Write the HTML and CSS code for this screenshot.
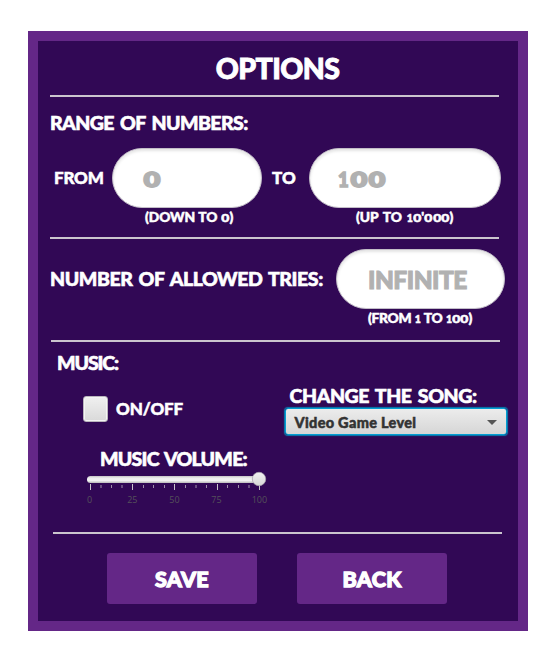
FILE: index.html
```
<!DOCTYPE html>
<html lang="en">
<head>
<meta charset="utf-8">
<title>Options</title>
<link rel="stylesheet" href="styles.css">
</head>
<body>
<main class="panel">
  <header class="top"><h1>OPTIONS</h1></header>

  <section class="range">
    <h2 class="range-title">RANGE OF NUMBERS:</h2>
    <div class="range-row">
      <span class="word from">FROM</span>
      <div class="col col-from">
        <div class="field"><span class="ring">0</span></div>
        <small class="hint hint-from">(DOWN TO <span class="nil">0</span>)</small>
      </div>
      <span class="word to">TO</span>
      <div class="col col-to">
        <div class="field hundred"><span class="one">1</span><span class="ring">0</span><span class="ring">0</span></div>
        <small class="hint hint-to">(UP TO <span class="low">1</span><span class="nil">0</span>'<span class="nil">0</span><span class="nil">0</span><span class="nil">0</span>)</small>
      </div>
    </div>
  </section>

  <section class="tries">
    <h2 class="tries-title">NUMBER OF ALLOWED TRIES:</h2>
    <div class="col col-tries">
      <div class="field infinite">INFINITE</div>
      <small class="hint hint-tries">(FROM <span class="low">1</span> TO <span class="low">1</span><span class="nil">0</span><span class="nil">0</span>)</small>
    </div>
  </section>

  <section class="music">
    <div class="music-left">
      <h2 class="music-title">MUSIC:</h2>
      <div class="toggle"><span class="box"></span><span class="word onoff">ON/OFF</span></div>
      <h2 class="volume-title">MUSIC VOLUME:</h2>
      <svg class="slider" width="190" height="36" viewBox="82 470 190 36">
        <defs>
          <linearGradient id="track" x1="0" y1="0" x2="0" y2="1"><stop offset="0" stop-color="#c2c2c2"/><stop offset=".3" stop-color="#eeeeee"/><stop offset=".65" stop-color="#f2f2f2"/><stop offset="1" stop-color="#b8b8b8"/></linearGradient>
          <linearGradient id="thumb" x1="0" y1="0" x2="0" y2="1"><stop offset="0" stop-color="#f2f2f2"/><stop offset="1" stop-color="#d6d6d6"/></linearGradient>
        </defs>
        <path class="major" d="M90.5 484v6M132.5 484v6M174.5 484v6M217.5 484v6M259.5 484v6"/>
        <path class="minor" d="M101 485v3M111.5 485v3M122 485v3M143.500 485v3M153.500 485v3M164.500 485v3M185.500 485v3M196 485v3M206.500 485v3M227.500 485v3M238.500 485v3M249 485v3"/>
        <rect x="87" y="476" width="177" height="7" rx="3.500" fill="url(#track)"/>
        <circle cx="259" cy="479" r="6.700" fill="url(#thumb)" stroke="#aaa5ae" stroke-width=".8"/>
        <g class="labels"><text x="89.700" y="503">0</text><text x="132.300" y="503">25</text><text x="174.500" y="503">50</text><text x="216.500" y="503">75</text><text x="259.400" y="503">100</text></g>
      </svg>
    </div>
    <div class="music-right">
      <h2 class="song-title">CHANGE THE SONG:</h2>
      <div class="combo"><span>Video Game Level</span><i class="arrow"></i></div>
    </div>
  </section>

  <footer class="actions">
    <button class="btn">SAVE</button>
    <button class="btn">BACK</button>
  </footer>
</main>
</body>
</html>
```
FILE: styles.css
```
* { box-sizing: border-box; }
body { margin: 0; background: #fff; color: #fff; font-family: "Lato", "Liberation Sans", sans-serif; font-weight: 900; -webkit-text-stroke: .5px currentColor; }
.panel { width: 500px; height: 600px; margin: 31px 0 0 28px; border: 10px solid #642787; background: #310855; }
h1, h2 { margin: 0; font-weight: 900; white-space: nowrap; }
h1 { font-size: 28.500px; line-height: 54px; letter-spacing: -.6px; text-align: center; -webkit-text-stroke-width: .9px; }
h2 { font-size: 19.500px; line-height: 26px; word-spacing: 2px; -webkit-text-stroke-width: .6px; }

.top, .range, .tries, .music { border-bottom: 2px solid #cbc5ce; }
.top { height: 56px; margin: 0 19px 0 12px; }
.top h1 { padding-left: 6px; }

.range { height: 142px; margin: 0 19px 0 12px; padding-top: 13px; }
.range-title { letter-spacing: -.55px; }
.range-row { display: flex; width: 455px; margin-top: 12px; }
.word { font-size: 17px; line-height: 60px; white-space: nowrap; }
.from { width: 58px; margin-left: 4px; letter-spacing: -.2px; }
.to { width: 37px; margin-left: 10px; }
.col { flex: none; text-align: center; }
.col-from { width: 150px; }
.col-to { width: 192px; }
.field {
  display: flex; align-items: center; height: 60px; padding-left: 30px; border-radius: 30px;
  background: #fff; color: #b1b1b1; border: 1px solid #c3bec8; box-shadow: inset 0 2px 3px #e4e4e4;
  font-size: 22px;
}
.ring { display: inline-block; flex: none; width: 18px; font-size: 20.500px; text-align: center; transform: translateY(1px) scaleX(1.38); -webkit-text-stroke-width: 1.800px; }
.ring { text-indent: 3px; display: flex; justify-content: center; text-indent: 0; }
.one { width: 11.500px; font-size: 20.500px; transform: translateY(1px) scaleX(.9); transform-origin: left; -webkit-text-stroke-width: 1.500px; }
.hundred { padding-left: 28px; }
.hint { display: block; font-size: 13.800px; line-height: 17px; white-space: nowrap; text-align: left; }
.hint-from { padding-left: 33px; letter-spacing: -.1px; word-spacing: .5px; }
.hint-to { padding-left: 47px; word-spacing: 1.500px; }
.hint-tries { padding-left: 32px; letter-spacing: -.3px; word-spacing: .6px; }
.nil { display: inline-block; width: 8.400px; font-size: 10.500px; text-align: center; letter-spacing: 0; transform: scaleX(1.32); }
.low { font-size: 10.500px; }

.tries { display: flex; width: 449px; height: 103px; margin-left: 13px; padding-top: 10px; }
.tries-title { flex: none; width: 285px; margin-left: -1px; line-height: 60px; letter-spacing: -.43px; }
.col-tries { width: 169px; margin-left: 1px; }
.infinite { font-size: 24.500px; padding-left: 31px; letter-spacing: -.5px; -webkit-text-stroke-width: 1px; }

.music { display: flex; width: 449px; height: 192px; margin-left: 15px; }
.music-left { width: 231.500px; flex: none; }
.music-title { margin: 8px 0 0 4px; letter-spacing: -1.1px; }
.toggle { display: flex; align-items: center; height: 26px; margin: 20px 0 0 30px; }
.box { width: 25px; height: 26px; margin-right: 8px; border: 1px solid #bab6bd; border-radius: 3px; background: linear-gradient(#f0f0f0, #d9d9d9); box-shadow: inset 0 0 0 1px #f4f4f4; }
.onoff { line-height: 26px; letter-spacing: -.1px; }
.volume-title { margin: 24px 0 0 47px; padding-bottom: 1px; letter-spacing: -.75px; }
.slider { display: block; margin: -3px 0 0 29px; }
.major { stroke: #c9c4cc; stroke-width: 1; }
.minor { stroke: #9d8fa9; stroke-width: 1; }
.labels { font: 400 9px "Open Sans", sans-serif; fill: #55505a; text-anchor: middle; -webkit-text-stroke-width: 0; }
.music-right { width: 222px; flex: none; padding-top: 41px; }
.song-title { padding-left: 5px; letter-spacing: -.4px; }
.combo {
  display: flex; align-items: center; justify-content: space-between; height: 27px; margin-top: -1px; padding: 2px 9px 0;
  border: 1px solid #039ed3; border-radius: 3px; background: linear-gradient(#ececec, #d6d6d6);
  box-shadow: 0 0 1px 1px #087daf; color: #333; font-size: 14.500px; letter-spacing: .3px; white-space: nowrap;
}
.arrow { border: 5px solid transparent; border-top-color: #555; border-bottom: 0; }

.actions { display: flex; gap: 40px; padding: 19px 0 0 69px; }
.btn { width: 150px; height: 51px; padding: 0; border: 0; border-radius: 3px; background: #642787; color: #fff; font: 900 21.500px "Lato", sans-serif; -webkit-text-stroke: 1.300px #fff; letter-spacing: .3px; }
```
